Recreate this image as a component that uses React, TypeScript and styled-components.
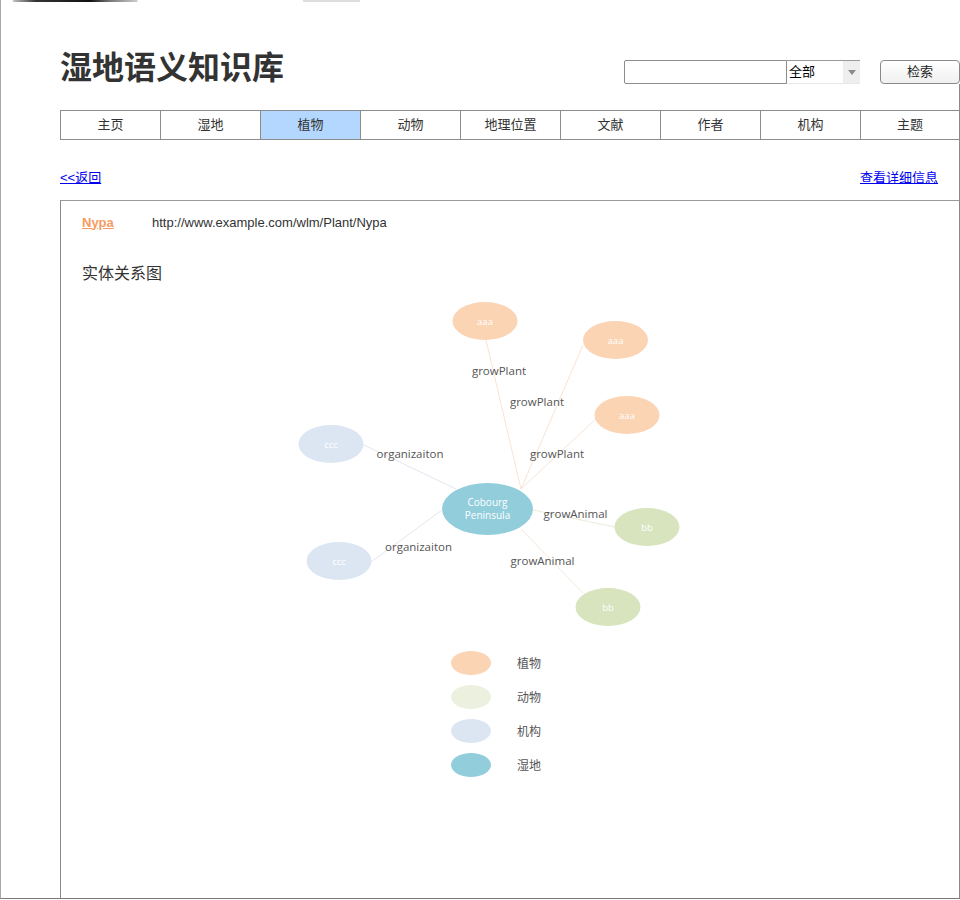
import React from "react";
import styled, { createGlobalStyle } from "styled-components";

const GlobalStyle = createGlobalStyle`
  html, body { margin: 0; padding: 0; background: #fff; }
  body { font-family: "Liberation Sans", "Noto Sans CJK SC", sans-serif; color: #333; }
  * { box-sizing: border-box; }
`;

const Page = styled.div`
  position: relative;
  width: 960px;
  height: 899px;
  display: flex;
  flex-direction: column;
  border-left: 1px solid #a8a8a8;
  border-bottom: 1px solid #7a7a7a;
  &::after {
    content: "";
    position: absolute;
    right: 0;
    top: 84px;
    bottom: 0;
    width: 1px;
    background: #8a8a8a;
  }
`;

const TopEdge = styled.div`
  height: 2px;
  margin-left: -1px;
  background:
    linear-gradient(to right, transparent 12px, #bbb 14px, #333 36px, #111 90px, #777 110px, #ccc 137px, transparent 138px),
    linear-gradient(to right, transparent 303px, #ddd 303px, #ddd 360px, transparent 360px);
  background-repeat: no-repeat;
`;

const Main = styled.div`
  flex: 1;
  display: flex;
  flex-direction: column;
  padding: 45px 0 0 59px;
`;

const Header = styled.div`
  display: flex;
  justify-content: space-between;
  align-items: flex-start;
`;

const Title = styled.h1`
  margin: 0;
  font-family: "Noto Sans CJK SC", sans-serif;
  font-size: 32px;
  line-height: 36px;
  font-weight: 700;
  color: #333;
`;

const SearchBar = styled.div`
  display: flex;
  align-items: center;
  margin-top: 13px;
`;

const SearchInput = styled.div`
  width: 163px;
  height: 24px;
  border: 1px solid #8c8c8c;
  border-radius: 2px 0 0 2px;
  background: #fff;
`;

const SelectBox = styled.div`
  width: 73px;
  height: 24px;
  display: flex;
  align-items: center;
  justify-content: space-between;
  border-top: 1px solid #9a9a9a;
  border-bottom: 1px solid #e8e8e8;
  font-family: "Noto Sans CJK SC", sans-serif;
  font-size: 13px;
  line-height: 16px;
  color: #000;
  padding-left: 2px;
  & > span {
    padding-bottom: 2px;
  }
`;

const ArrowBox = styled.div`
  width: 17px;
  height: 22px;
  background: #eeeeee;
  display: flex;
  align-items: center;
  justify-content: center;
  &::before {
    content: "";
    border-left: 4px solid transparent;
    border-right: 4px solid transparent;
    border-top: 5px solid #8a8a8a;
  }
`;

const SearchButton = styled.button`
  margin-left: 20px;
  width: 80px;
  height: 24px;
  border: 1px solid #8a8a8a;
  border-radius: 4px;
  background: linear-gradient(#ffffff, #f0f0f0);
  font-family: "Noto Sans CJK SC", sans-serif;
  font-size: 13px;
  line-height: 16px;
  color: #222;
  padding: 0 0 2px;
`;

const Nav = styled.nav`
  margin-top: 26px;
  display: grid;
  grid-template-columns: repeat(9, 100px);
  height: 30px;
`;

const NavItem = styled.div<{ $active?: boolean; $last?: boolean }>`
  display: flex;
  align-items: center;
  justify-content: center;
  padding-bottom: 2px;
  border-top: 1px solid #8c8c8c;
  border-bottom: 1px solid #8c8c8c;
  border-left: 1px solid #8c8c8c;
  border-right: ${(p) => (p.$last ? "1px solid #8c8c8c" : "none")};
  background: ${(p) => (p.$active ? "#b3d7ff" : "#fff")};
  font-family: "Noto Sans CJK SC", sans-serif;
  font-size: 13px;
  line-height: 16px;
  color: #333;
`;

const LinkRow = styled.div`
  margin-top: 30px;
  display: flex;
  justify-content: space-between;
  padding-right: 22px;
  height: 16px;
`;

const TextLink = styled.a`
  font-family: "Liberation Sans", "Noto Sans CJK SC", sans-serif;
  font-size: 13px;
  line-height: 16px;
  color: #0000ee;
  text-decoration: underline;
  cursor: pointer;
`;

const ContentBox = styled.section`
  margin-top: 14px;
  flex: 1;
  border-left: 1px solid #8a8a8a;
  border-top: 1px solid #9a9a9a;
  border-right: 1px solid #8a8a8a;
  display: flex;
  flex-direction: column;
`;

const EntityRow = styled.div`
  margin-top: 13px;
  padding-left: 21px;
  display: flex;
  align-items: center;
  height: 16px;
`;

const EntityName = styled.a`
  width: 70px;
  font-family: "Liberation Sans", sans-serif;
  font-size: 13px;
  font-weight: 700;
  color: #f79a62;
  text-decoration: underline;
`;

const EntityUri = styled.span`
  font-family: "Liberation Sans", sans-serif;
  font-size: 13px;
  color: #333;
`;

const SectionTitle = styled.h2`
  margin: 32px 0 0 21px;
  font-family: "Noto Sans CJK SC", sans-serif;
  font-size: 16px;
  line-height: 20px;
  font-weight: 400;
  color: #333;
`;

const GraphSvg = styled.svg`
  display: block;
  margin-top: 8px;
`;

const Legend = styled.div`
  margin: 11px 0 0 390px;
  display: flex;
  flex-direction: column;
  gap: 10px;
`;

const LegendRow = styled.div`
  display: flex;
  align-items: center;
  gap: 26px;
  height: 24px;
`;

const LegendSwatch = styled.span<{ $color: string }>`
  width: 40px;
  height: 24px;
  border-radius: 50%;
  background: ${(p) => p.$color};
`;

const LegendLabel = styled.span`
  font-family: "Noto Sans CJK SC", sans-serif;
  font-size: 12px;
  line-height: 16px;
  padding-bottom: 1px;
  color: #555;
`;

const COLORS = {
  plant: "#fbd4b4",
  animalNode: "#d7e4bd",
  animal: "#ebf1de",
  org: "#dce6f2",
  wetland: "#92cddc",
};

type Node = { x: number; y: number; label: string; fill: string };

const nodes: Node[] = [
  { x: 424, y: 31, label: "aaa", fill: COLORS.plant },
  { x: 554.5, y: 50, label: "aaa", fill: COLORS.plant },
  { x: 566, y: 125, label: "aaa", fill: COLORS.plant },
  { x: 270, y: 154, label: "ccc", fill: COLORS.org },
  { x: 278, y: 271, label: "ccc", fill: COLORS.org },
  { x: 586, y: 237, label: "bb", fill: COLORS.animalNode },
  { x: 547, y: 317, label: "bb", fill: COLORS.animalNode },
];

const edges = [
  { x1: 425, y1: 50, x2: 460, y2: 199, c: "#f8e4d4" },
  { x1: 522, y1: 55, x2: 460, y2: 199, c: "#f8e4d4" },
  { x1: 536, y1: 128, x2: 460, y2: 199, c: "#f8e4d4" },
  { x1: 303, y1: 155, x2: 395, y2: 199, c: "#e2e7ef" },
  { x1: 310, y1: 272, x2: 381, y2: 220, c: "#e2e7ef" },
  { x1: 472, y1: 220, x2: 554, y2: 237, c: "#e8edda" },
  { x1: 460, y1: 239, x2: 522, y2: 303, c: "#f3e8de" },
];

const edgeLabels = [
  { x: 438, y: 80, t: "growPlant" },
  { x: 476, y: 111, t: "growPlant" },
  { x: 496, y: 163, t: "growPlant" },
  { x: 349, y: 163, t: "organizaiton" },
  { x: 357.5, y: 256, t: "organizaiton" },
  { x: 514.5, y: 223, t: "growAnimal" },
  { x: 481.5, y: 270, t: "growAnimal" },
];

const navItems = ["主页", "湿地", "植物", "动物", "地理位置", "文献", "作者", "机构", "主题"];

const legendItems = [
  { c: COLORS.plant, t: "植物" },
  { c: COLORS.animal, t: "动物" },
  { c: COLORS.org, t: "机构" },
  { c: COLORS.wetland, t: "湿地" },
];

function RelationGraph() {
  return (
    <GraphSvg width={898} height={350} viewBox="0 0 898 350">
      {edges.map((e, i) => (
        <line key={i} x1={e.x1} y1={e.y1} x2={e.x2} y2={e.y2} stroke={e.c} strokeWidth={1} />
      ))}
      {nodes.map((n, i) => (
        <g key={i}>
          <ellipse cx={n.x} cy={n.y} rx={32.5} ry={19} fill={n.fill} />
          <text
            x={n.x}
            y={n.y}
            textAnchor="middle"
            dominantBaseline="central"
            fontFamily="'Open Sans', sans-serif"
            fontSize={9.5}
            fill="#ffffff"
          >
            {n.label}
          </text>
        </g>
      ))}
      <ellipse cx={426.5} cy={219} rx={45.5} ry={26} fill={COLORS.wetland} />
      <text textAnchor="middle" fontFamily="'Open Sans', sans-serif" fontSize={10} fill="#ffffff">
        <tspan x={426.5} y={216}>Cobourg</tspan>
        <tspan x={426.5} y={229}>Peninsula</tspan>
      </text>
      {edgeLabels.map((l, i) => (
        <text
          key={i}
          x={l.x}
          y={l.y}
          textAnchor="middle"
          dominantBaseline="central"
          fontFamily="'Open Sans', sans-serif"
          fontSize={11.5}
          fill="#555555"
        >
          {l.t}
        </text>
      ))}
    </GraphSvg>
  );
}

export default function App() {
  return (
    <>
      <GlobalStyle />
      <Page>
        <TopEdge />
        <Main>
          <Header>
            <Title>湿地语义知识库</Title>
            <SearchBar>
              <SearchInput />
              <SelectBox>
                <span>全部</span>
                <ArrowBox />
              </SelectBox>
              <SearchButton>检索</SearchButton>
            </SearchBar>
          </Header>
          <Nav>
            {navItems.map((item, i) => (
              <NavItem key={item} $active={item === "植物"} $last={i === navItems.length - 1}>
                {item}
              </NavItem>
            ))}
          </Nav>
          <LinkRow>
            <TextLink>&lt;&lt;返回</TextLink>
            <TextLink>查看详细信息</TextLink>
          </LinkRow>
          <ContentBox>
            <EntityRow>
              <EntityName>Nypa</EntityName>
              <EntityUri>http://www.example.com/wlm/Plant/Nypa</EntityUri>
            </EntityRow>
            <SectionTitle>实体关系图</SectionTitle>
            <RelationGraph />
            <Legend>
              {legendItems.map((l) => (
                <LegendRow key={l.t}>
                  <LegendSwatch $color={l.c} />
                  <LegendLabel>{l.t}</LegendLabel>
                </LegendRow>
              ))}
            </Legend>
          </ContentBox>
        </Main>
      </Page>
    </>
  );
}
